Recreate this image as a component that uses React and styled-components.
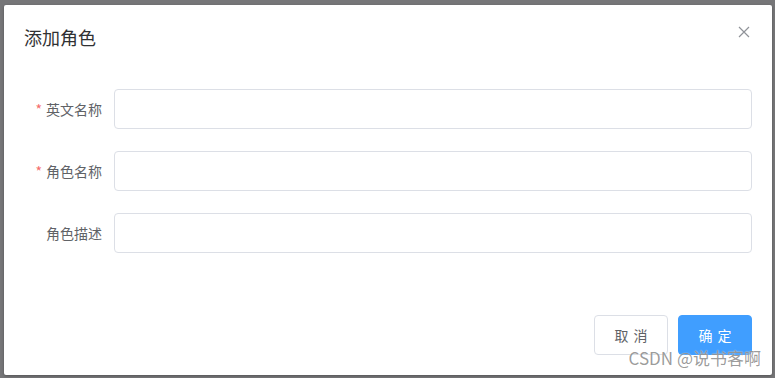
import React from 'react';
import styled, { createGlobalStyle } from 'styled-components';

const GlobalStyle = createGlobalStyle`
  html, body {
    margin: 0;
    padding: 0;
    background: #777779;
    font-family: "Noto Sans CJK SC", "Helvetica Neue", Helvetica, Arial, sans-serif;
  }
`;

const Overlay = styled.div`
  width: 775px;
  height: 378px;
  box-sizing: border-box;
  padding: 5px 3px 0 4px;
  position: relative;
  overflow: hidden;
  background: #767678;
`;

const Dialog = styled.div`
  position: relative;
  width: 768px;
  background: #ffffff;
  border-radius: 2px;
  box-shadow: 0 1px 3px rgba(0, 0, 0, 0.3);
  box-sizing: border-box;
`;

const Header = styled.div`
  display: flex;
  align-items: center;
  justify-content: space-between;
  padding: 20px 20px 10px;
`;

const Title = styled.span`
  font-size: 18px;
  line-height: 24px;
  color: #303133;
`;

const CloseBtn = styled.button`
  border: none;
  background: transparent;
  padding: 0;
  width: 16px;
  height: 16px;
  display: flex;
  align-items: center;
  justify-content: center;
  color: #909399;
  cursor: pointer;
  margin-top: -10px;
`;

const Body = styled.div`
  padding: 30px 20px;
`;

const FormItem = styled.div`
  display: flex;
  margin-bottom: 22px;
`;

const Label = styled.label`
  width: 90px;
  flex: none;
  box-sizing: border-box;
  padding-right: 12px;
  text-align: right;
  font-size: 14px;
  line-height: 40px;
  color: #606266;

  &::before {
    content: ${({ $required }) => ($required ? "'*'" : "''")};
    color: #f56c6c;
    margin-right: 4px;
  }
`;

const Input = styled.input`
  flex: 1;
  height: 40px;
  box-sizing: border-box;
  border: 1px solid #dcdfe6;
  border-radius: 4px;
  padding: 0 15px;
  font-size: 14px;
  color: #606266;
  outline: none;
  background: #fff;
`;

const Footer = styled.div`
  display: flex;
  justify-content: flex-end;
  gap: 10px;
  padding: 10px 20px 20px;
`;

const Button = styled.button`
  height: 40px;
  width: 74px;
  box-sizing: border-box;
  padding: 0;
  border-radius: 4px;
  font-family: inherit;
  font-size: 14px;
  line-height: 1;
  letter-spacing: 1px;
  text-indent: 1px;
  white-space: pre;
  cursor: pointer;
  border: 1px solid ${({ $primary }) => ($primary ? '#409eff' : '#dcdfe6')};
  background: ${({ $primary }) => ($primary ? '#409eff' : '#ffffff')};
  color: ${({ $primary }) => ($primary ? '#ffffff' : '#606266')};
`;

const Watermark = styled.span`
  position: absolute;
  right: 11px;
  bottom: 6px;
  font-size: 17px;
  line-height: 22px;
  color: rgba(70, 70, 70, 0.55);
  text-shadow: 0 0 1px #ffffff;
  pointer-events: none;
  font-family: "Noto Sans CJK SC", "Liberation Sans", sans-serif;
`;

const fields = [
  { label: '英文名称', required: true },
  { label: '角色名称', required: true },
  { label: '角色描述', required: false },
];

export default function App() {
  return (
    <>
      <GlobalStyle />
      <Overlay>
        <Dialog>
          <Header>
            <Title>添加角色</Title>
            <CloseBtn aria-label="close">
              <svg width="12" height="12" viewBox="0 0 12 12">
                <path d="M1 1 L11 11 M11 1 L1 11" stroke="currentColor" strokeWidth="1.2" fill="none" />
              </svg>
            </CloseBtn>
          </Header>
          <Body>
            {fields.map((f) => (
              <FormItem key={f.label}>
                <Label $required={f.required}>{f.label}</Label>
                <Input />
              </FormItem>
            ))}
          </Body>
          <Footer>
            <Button>{'取 消'}</Button>
            <Button $primary>{'确 定'}</Button>
          </Footer>
          <Watermark>CSDN @说书客啊</Watermark>
        </Dialog>
      </Overlay>
    </>
  );
}
